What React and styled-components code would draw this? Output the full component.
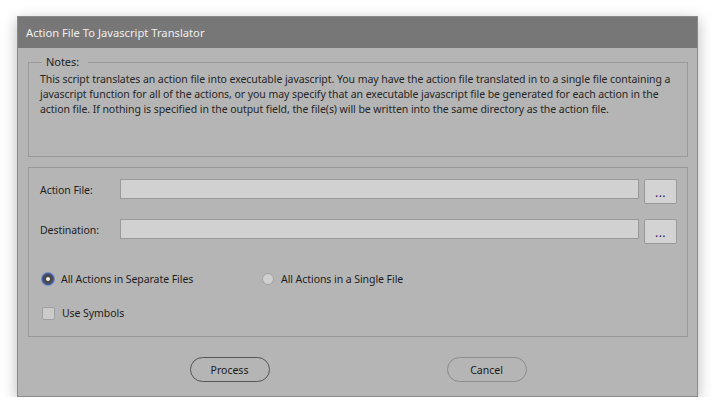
import React from 'react';
import styled, { createGlobalStyle } from 'styled-components';

const Global = createGlobalStyle`
  html, body {
    margin: 0;
    background: #ffffff;
  }
  body {
    font-family: 'Noto Sans', 'Open Sans', sans-serif;
    font-size: 10.5px;
    letter-spacing: -0.06px;
    color: #1e1e1e;
  }
`;

const Page = styled.div`
  padding: 16px 0 0 17px;
`;

const Window = styled.div`
  width: 679px;
  height: 379px;
  background: #b5b5b5;
  border: 1px solid #8a8a8a;
  box-shadow: 0 4px 14px rgba(0, 0, 0, 0.28);
  display: flex;
  flex-direction: column;
`;

const TitleBar = styled.div`
  height: 31px;
  flex: none;
  background: #777777;
  color: #f0f0f0;
  font-size: 11.2px;
  letter-spacing: 0;
  display: flex;
  align-items: center;
  padding-left: 8px;
`;

const Body = styled.div`
  padding: 6px 9px 0 10px;
  display: flex;
  flex-direction: column;
`;

const Notes = styled.fieldset`
  margin: 0;
  min-width: 0;
  height: 99px;
  border: 1px solid #999;
  padding: 2px 10px 0 11px;
  overflow: hidden;
`;

const Legend = styled.legend`
  margin-left: 2px;
  padding: 0 9px 0 4px;
  line-height: 16px;
  font-size: 11px;
  color: #1e1e1e;
`;

const NotesText = styled.p`
  margin: 0;
  line-height: 15px;
  white-space: nowrap;
  color: #262626;
`;

const Panel = styled.div`
  margin-top: 10px;
  height: 157px;
  border: 1px solid #999;
  padding: 11px 10px 0 11px;
  display: flex;
  flex-direction: column;
`;

const FileRow = styled.div`
  display: flex;
  align-items: flex-start;
  height: 25px;
  margin-bottom: ${(p) => p.gap || 0}px;
`;

const Label = styled.div`
  width: 80px;
  height: 20px;
  line-height: 22px;
`;

const Input = styled.div`
  width: 518px;
  height: 18px;
  background: #d1d1d1;
  border: 1px solid #999;
`;

const Browse = styled.button`
  margin-left: 5px;
  width: 33px;
  height: 25px;
  background: #d3d3d3;
  border: 1px solid #9a9a9a;
  border-radius: 2px;
  font: inherit;
  font-size: 12px;
  letter-spacing: 0.5px;
  color: #2a2060;
  padding: 2px 0 0;
  line-height: 1;
`;

const OptionRow = styled.div`
  display: flex;
  align-items: center;
  height: 16px;
  margin-left: 2px;
  margin-top: ${(p) => p.top}px;
`;

const Option = styled.div`
  display: flex;
  align-items: center;
  gap: 7px;
  width: ${(p) => p.width || 'auto'};
`;

const Radio = styled.span`
  box-sizing: border-box;
  width: 12px;
  height: 12px;
  border-radius: 50%;
  background: ${(p) => (p.checked ? '#4a4a4a' : '#cfcfcf')};
  border: 1px solid ${(p) => (p.checked ? '#3658b8' : '#a3a3a3')};
  box-shadow: ${(p) => (p.checked ? '0 0 0 1px rgba(54,88,184,0.45)' : 'none')};
  display: flex;
  align-items: center;
  justify-content: center;

  &::after {
    content: '';
    width: 4px;
    height: 4px;
    border-radius: 50%;
    background: ${(p) => (p.checked ? '#f4f4f4' : 'transparent')};
  }
`;

const Check = styled.span`
  box-sizing: border-box;
  width: 13px;
  height: 13px;
  background: #cbcbcb;
  border: 1px solid #a0a0a0;
  border-radius: 2px;
`;

const Actions = styled.div`
  display: flex;
  justify-content: center;
  gap: 177px;
  margin-top: 20px;
`;

const PillButton = styled.button`
  width: 80px;
  height: 25px;
  border-radius: 13px;
  background: transparent;
  border: 1px solid ${(p) => (p.primary ? '#555' : '#8c8c8c')};
  font: inherit;
  color: #1a1a1a;
  padding: 0;
`;

export default function App() {
  return (
    <>
      <Global />
      <Page>
        <Window>
          <TitleBar>Action File To Javascript Translator</TitleBar>
          <Body>
            <Notes>
              <Legend>Notes:</Legend>
              <NotesText>
                This script translates an action file into executable javascript. You may have the action file translated in to a single file containing a
                <br />
                javascript function for all of the actions, or you may specify that an executable javascript file be generated for each action in the
                <br />
                action file. If nothing is specified in the output field, the file(s) will be written into the same directory as the action file.
              </NotesText>
            </Notes>
            <Panel>
              <FileRow gap={15}>
                <Label>Action File:</Label>
                <Input />
                <Browse>...</Browse>
              </FileRow>
              <FileRow>
                <Label>Destination:</Label>
                <Input />
                <Browse>...</Browse>
              </FileRow>
              <OptionRow top={27}>
                <Option width="220px">
                  <Radio checked />
                  All Actions in Separate Files
                </Option>
                <Option>
                  <Radio />
                  All Actions in a Single File
                </Option>
              </OptionRow>
              <OptionRow top={18}>
                <Option>
                  <Check />
                  Use Symbols
                </Option>
              </OptionRow>
            </Panel>
            <Actions>
              <PillButton primary>Process</PillButton>
              <PillButton>Cancel</PillButton>
            </Actions>
          </Body>
        </Window>
      </Page>
    </>
  );
}
